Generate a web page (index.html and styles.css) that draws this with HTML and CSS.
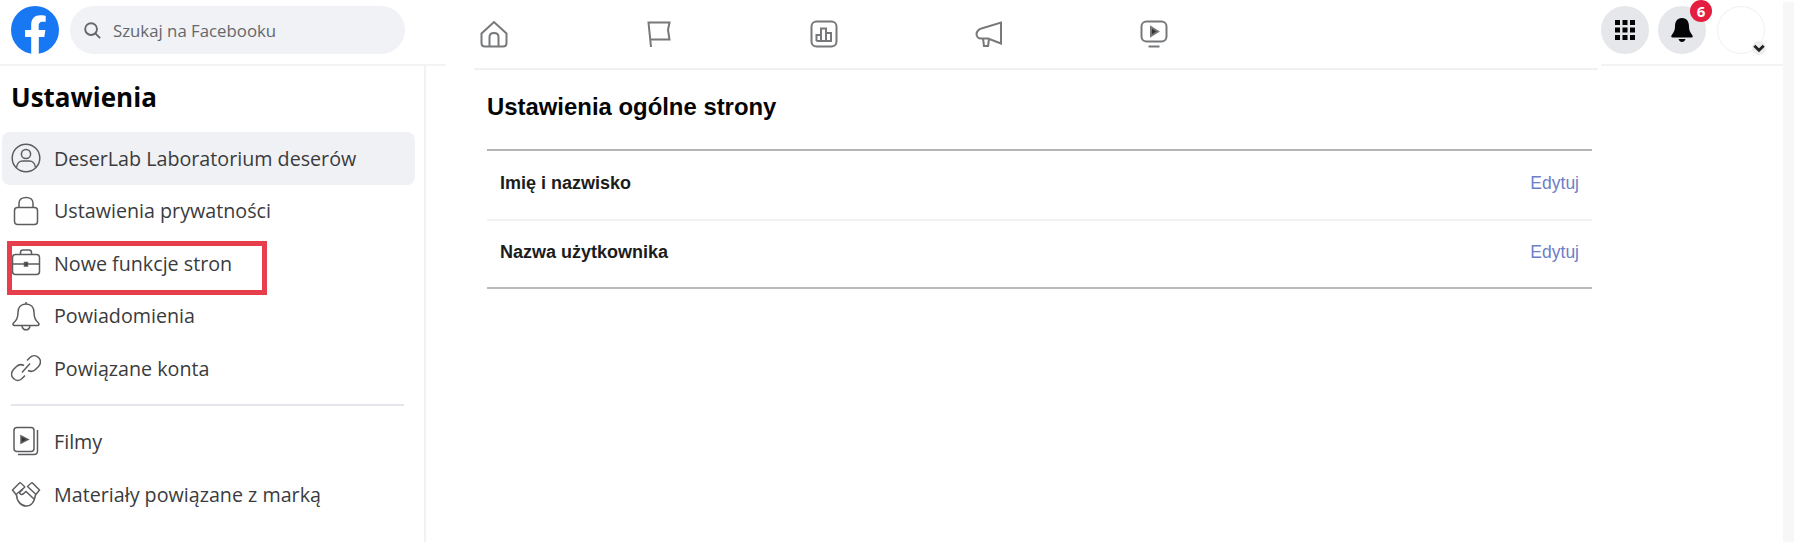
FILE: index.html
```html
<!DOCTYPE html>
<html lang="pl">
<head>
  <meta charset="UTF-8" />
  <meta name="viewport" content="width=device-width, initial-scale=1.0"/>
  <title>Ustawienia ogólne strony</title>
  <link rel="stylesheet" href="styles.css">
</head>
<body>
  <div class="page">

    <!-- left: logo, search, settings menu -->
    <div class="left">
      <header class="left-top">
        <svg class="logo" viewBox="0 0 48 48"><circle cx="24" cy="24" r="24" fill="#1877f2"/><path fill="#fff" d="M33.3 31l1.1-7h-6.7v-4.5c0-1.9.9-3.8 4-3.8h3v-6s-2.8-.5-5.4-.5c-5.5 0-9.1 3.3-9.1 9.4V24h-6.1v7h6.1v16.8c1.2.2 2.5.2 3.8.2s2.6 0 3.8-.2V31z"/></svg>
        <div class="search">
          <svg class="search-icon" viewBox="0 0 20 20"><circle cx="8.5" cy="8.5" r="6.2"/><path d="M13 13l5 5"/></svg>
          <span>Szukaj na Facebooku</span>
        </div>
      </header>

      <nav class="sidebar">
        <h2 class="sidebar-title">Ustawienia</h2>

        <a class="item active">
          <svg class="item-icon" viewBox="0 0 30 30"><circle cx="15" cy="15" r="13.8"/><circle cx="15" cy="11" r="4.6"/><path d="M5.5 24.5c.5-4.5 3.5-6.5 6-6.5h7c2.500 0 5.500 2 6 6.500"/></svg>
          <span>DeserLab Laboratorium deserów</span>
        </a>
        <a class="item">
          <svg class="item-icon" viewBox="0 0 30 30"><rect x="3.500" y="11.500" width="23" height="17" rx="3"/><path d="M8 11.500V7c0-3.500 3-5.500 7-5.500s7 2 7 5.500v4.500"/></svg>
          <span>Ustawienia prywatności</span>
        </a>
        <a class="item">
          <svg class="item-icon" viewBox="0 0 30 30"><rect x="1.500" y="6.500" width="27" height="20" rx="3"/><path d="M9.500 6.500V4.500c0-1.500 1-2.500 2.500-2.500h6c1.500 0 2.500 1 2.500 2.500v2M1.500 16h27"/><rect class="solid" x="13.500" y="14.500" width="3" height="3.500"/></svg>
          <span>Nowe funkcje stron</span>
          <span class="mark"></span>
        </a>
        <a class="item">
          <svg class="item-icon" viewBox="0 0 30 30"><path d="M15 3c-5 0-8 3.500-8 8.500 0 6-2 8-4.500 10.500-1 1-.5 2.500 1 2.500h23c1.500 0 2-1.500 1-2.500C25 19.500 23 17.500 23 11.500 23 6.500 20 3 15 3z"/><path d="M11 25c.5 2.500 2 3.800 4 3.800s3.500-1.300 4-3.800M15 3V1"/></svg>
          <span>Powiadomienia</span>
        </a>
        <a class="item">
          <svg class="item-icon" viewBox="0 0 30 30"><path d="M13 12.500c-3-1.500-5.500-1-7.500 1l-3 3c-2.500 3-2.500 6.500 0 9s6 2.500 8.500 0l3-3"/><path d="M17 17.500c3 1.500 5.500 1 7.500-1l3-3c2.500-3 2.500-6.500 0-9s-6-2.500-8.500 0l-3 3"/><path d="M11 19.500l8-9"/></svg>
          <span>Powiązane konta</span>
        </a>

        <div class="divider"></div>

        <a class="item item-lower">
          <svg class="item-icon" viewBox="0 0 30 30"><rect x="3" y="1.500" width="20" height="24" rx="3"/><path d="M26.500 4v21c0 2-1 3.500-3.500 3.500H7"/><path class="solid" d="M10 10l7 3.500-7 3.500z"/></svg>
          <span>Filmy</span>
        </a>
        <a class="item item-lower">
          <svg class="item-icon" viewBox="0 0 30 30"><path d="M9 3.500L1.500 11l3.500 4.500L14 8"/><path d="M21 3.500l7.500 7.500-3.500 4.500L17 8"/><path d="M14 8c-2-2-3-3-5-4.500M16 8c2-2 3-3 5-4.500M12 10l-3 3c-1 2 1 3 3 2l3-2.500 8 7.500M5.500 15.500c0 7 5 11.500 9.500 11.500 4.500 0 8.500-3.500 9.500-11.500"/></svg>
          <span>Materiały powiązane z marką</span>
        </a>
      </nav>
    </div>

    <!-- middle: page tabs and the settings table -->
    <div class="center">
      <div class="tabs">
        <svg class="tab" viewBox="0 0 28 28"><path d="M1.500 13.500L14 2l12.500 11.500v9.500c0 2.500-1.500 3.500-3.500 3.500H5c-2 0-3.500-1-3.500-3.500z"/><path d="M9.500 26.500V17c0-2.500 2-4 4.500-4s4.500 1.500 4.500 4v9.500"/></svg>
        <svg class="tab" viewBox="0 0 28 28"><path d="M6 27L3.500 2.500h21L23 10l1.500 9.500H5"/></svg>
        <svg class="tab" viewBox="0 0 28 28"><rect x="1.500" y="1.500" width="25" height="25" rx="5"/><path d="M6.500 21v-6h4.500v6M11 21V8.500h5V21M16 21v-8h5v8zM6.500 21H21"/></svg>
        <svg class="tab" viewBox="0 0 28 28"><path d="M26 2.500v21l-13-5H6c-2.500 0-4.500-2-4.500-4.500S4 9 6.500 8.500L26 2.500z"/><path d="M8 18.500l1 7.500h4l1-7"/></svg>
        <svg class="tab" viewBox="0 0 28 28"><rect x="1.500" y="1.500" width="25" height="20" rx="5"/><path class="solid" d="M11 7l7 4.500-7 4.500z"/><path d="M8.500 26.500h11"/></svg>
      </div>

      <main class="content">
        <h1 class="content-title">Ustawienia ogólne strony</h1>
        <div class="table">
          <div class="row">
            <span class="row-label">Imię i nazwisko</span>
            <a class="row-edit">Edytuj</a>
          </div>
          <div class="row">
            <span class="row-label">Nazwa użytkownika</span>
            <a class="row-edit">Edytuj</a>
          </div>
        </div>
      </main>
    </div>

    <!-- right: round buttons -->
    <header class="right-top">
      <div class="round">
        <svg class="apps" viewBox="0 0 22 22"><path d="M1 1h5v5H1zM8.500 1h5v5h-5zM16 1h5v5h-5zM1 8.500h5v5H1zM8.500 8.500h5v5h-5zM16 8.500h5v5h-5zM1 16h5v5H1zM8.500 16h5v5h-5zM16 16h5v5h-5z"/></svg>
      </div>
      <div class="round">
        <svg class="bell" viewBox="0 0 22 24"><path d="M11 0C6 0 4 4 4 8.500c0 4.500-2 6.500-3.500 9-.5 1-.2 2 1 2h19c1.200 0 1.500-1 1-2C20 15 18 13 18 8.500 18 4 16 0 11 0z"/><path d="M7.500 21c.5 2 2 3 3.500 3s3-1 3.500-3z"/></svg>
        <span class="badge">6</span>
      </div>
      <div class="avatar">
        <span class="chevron"><svg viewBox="0 0 12 12"><path d="M2 4l4 4 4-4"/></svg></span>
      </div>
    </header>

    <div class="scrollbar"></div>
  </div>
</body>
</html>
```

FILE: styles.css
```css
body {
  margin: 0;
  height: 542px;
  overflow: hidden;
  background: #fff;
  font-family: 'Open Sans', sans-serif;
  color: #050505;
}

svg {
  display: block;
}

.page {
  display: flex;
  height: 542px;
}

/* left column */
.left {
  width: 446px;
  flex-shrink: 0;
  display: flex;
  flex-direction: column;
}

.left-top {
  height: 66px;
  flex-shrink: 0;
  box-sizing: border-box;
  padding: 6px 0 0 11px;
  display: flex;
  gap: 11px;
  border-bottom: 2px solid #f3f3f3;
}

.logo {
  width: 48px;
  height: 48px;
}

.search {
  width: 335px;
  height: 48px;
  box-sizing: border-box;
  padding-left: 13px;
  border-radius: 24px;
  background: #f0f2f5;
  display: flex;
  align-items: center;
  gap: 11px;
  font-size: 16.8px;
  color: #65676b;
}

.search-icon {
  width: 19px;
  height: 19px;
  fill: none;
  stroke: #65676b;
  stroke-width: 2;
}

.sidebar {
  width: 426px;
  flex: 1;
  box-sizing: border-box;
  padding: 0 9px 0 2px;
  border-right: 2px solid #f2f2f2;
}

.sidebar-title {
  margin: 0;
  height: 66px;
  padding: 0 0 0 9px;
  line-height: 62px;
  font-size: 26px;
  font-weight: 700;
}

.item {
  position: relative;
  height: 52.5px;
  display: flex;
  align-items: center;
  gap: 13px;
  padding-left: 9px;
  border-radius: 8px;
  font-size: 19.7px;
  font-weight: 500;
  color: #3a3b3d;
}

.item.active {
  background: #f0f1f5;
}

.item-lower {
  height: 53px;
}

.item-icon {
  width: 30px;
  height: 30px;
  flex-shrink: 0;
  fill: none;
  stroke: #5b5c5f;
  stroke-width: 1.500;
}

.item-icon .solid,
.tab .solid {
  fill: #333;
}

.mark {
  position: absolute;
  left: 5px;
  top: 4px;
  width: 260px;
  height: 54px;
  box-sizing: border-box;
  border: 5px solid #e63e4a;
}

.divider {
  height: 2px;
  margin: 9px 11px 9px 9px;
  background: #e4e6eb;
}

/* middle column */
.center {
  width: 1124px;
  margin-left: 28px;
  flex-shrink: 0;
}

.tabs {
  height: 70px;
  box-sizing: border-box;
  padding: 20px 0 0 6px;
  display: flex;
  gap: 137px;
  border-bottom: 2px solid #f0f0f0;
}

.tab {
  width: 28px;
  height: 28px;
  fill: none;
  stroke: #77787a;
  stroke-width: 2;
}

.content {
  padding: 0 6px 0 13px;
}

.content-title {
  margin: 0;
  height: 79px;
  line-height: 74px;
  font-family: 'Liberation Sans', sans-serif;
  font-size: 23.9px;
  font-weight: 700;
}

.table {
  border-top: 2px solid #b5b5b5;
  border-bottom: 2px solid #bbb;
}

.row {
  height: 68px;
  box-sizing: border-box;
  padding: 0 13px 3px;
  display: flex;
  align-items: center;
  justify-content: space-between;
  font-family: 'Liberation Sans', sans-serif;
}

.row + .row {
  border-top: 2px solid #f2f2f2;
}

.row-label {
  font-size: 18px;
  font-weight: 700;
  color: #1c1c1c;
}

.row-edit {
  font-size: 17.500px;
  color: #6b80c8;
}

/* right column */
.right-top {
  width: 182px;
  height: 66px;
  margin-left: 3px;
  flex-shrink: 0;
  box-sizing: border-box;
  padding: 6px 0 0 0;
  display: flex;
  gap: 9px;
  border-bottom: 2px solid #f3f3f3;
}

.round {
  position: relative;
  width: 48px;
  height: 48px;
  border-radius: 50%;
  background: #e6e7eb;
  display: flex;
  align-items: center;
  justify-content: center;
}

.apps {
  width: 22px;
  height: 22px;
  fill: #050505;
}

.bell {
  width: 22px;
  height: 24px;
  fill: #050505;
}

.badge {
  position: absolute;
  left: 32px;
  top: -6px;
  width: 22px;
  height: 22px;
  border-radius: 50%;
  background: #e41e3f;
  color: #fff;
  font-size: 15px;
  font-weight: 700;
  line-height: 22px;
  text-align: center;
}

.avatar {
  position: relative;
  width: 46px;
  height: 46px;
  margin-left: 2px;
  border: 1px solid #f0f0f0;
  border-radius: 50%;
}

.chevron {
  position: absolute;
  right: -2px;
  bottom: -2px;
  width: 14px;
  height: 14px;
  border-radius: 50%;
  background: #eceded;
}

.chevron svg {
  width: 14px;
  height: 14px;
  fill: none;
  stroke: #222;
  stroke-width: 2.400;
}

.scrollbar {
  width: 11px;
  height: 540px;
  margin-top: 2px;
  flex-shrink: 0;
  background: #f7f7f7;
}
```
